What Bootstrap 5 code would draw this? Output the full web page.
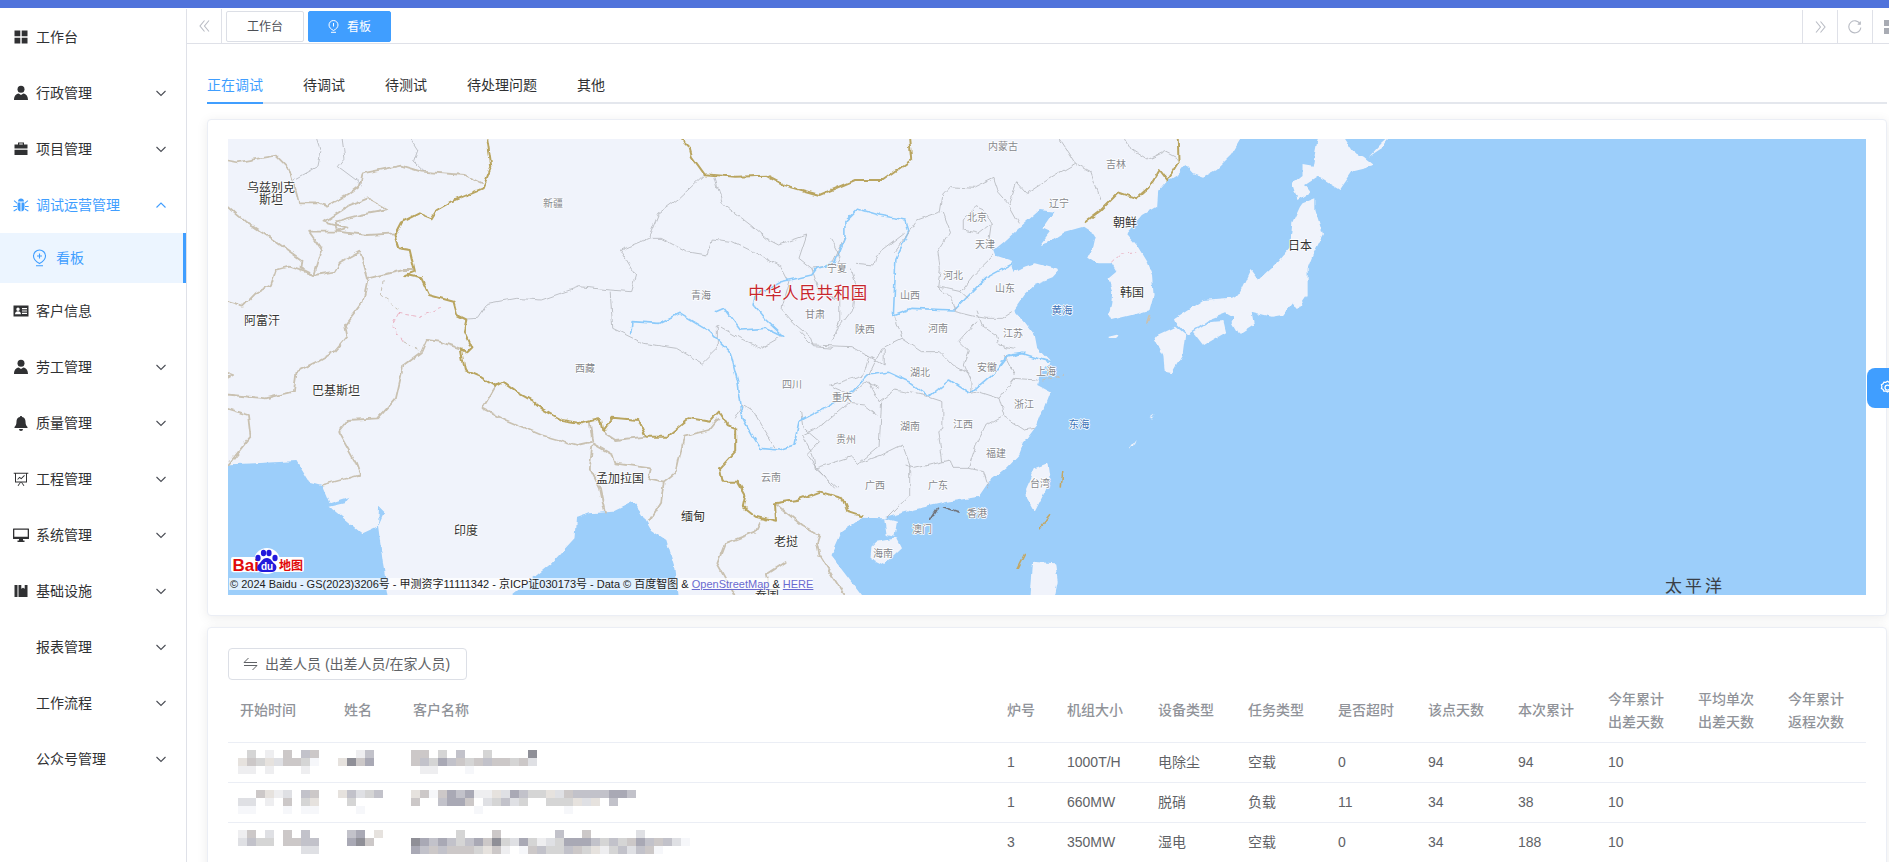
<!DOCTYPE html>
<html lang="zh-CN">
<head>
  <meta charset="UTF-8">
  <title>看板</title>
  <link href="https://cdn.jsdelivr.net/npm/bootstrap@5.3.0/dist/css/bootstrap.min.css" rel="stylesheet">
  <style>
    html, body { height: 862px; overflow: hidden; }
    body { font-family: "Liberation Sans", "Noto Sans CJK SC", sans-serif; font-size: 14px; color: #303133; background: #fff; }
    .top-line { height: 8px; background: #5073db; border-bottom: 0; }
    .shell { height: 854px; padding-top: 1px; }

    /* sidebar */
    .side-nav { width: 187px; flex: none; border-right: 1px solid #dfe1e8; }
    .side-item { height: 56px; padding-left: 13px; padding-right: 19px; color: #303133; white-space: nowrap; }
    .side-item .ico { width: 16px; height: 16px; flex: none; margin-right: 7px; fill: #303133; }
    .side-item .no-ico { width: 23px; flex: none; }
    .side-item .arrow { width: 12px; height: 12px; margin-left: auto; fill: none; stroke: #4a4d55; stroke-width: 1.1; }
    .side-item.is-open, .side-item.is-open .ico { color: #409eff; fill: #409eff; }
    .side-item.is-open .arrow { stroke: #409eff; fill: none; }
    .side-sub { height: 50px; padding-left: 32px; background: #ecf5ff; color: #409eff; border-right: 3px solid #409eff; }
    .side-sub svg { width: 15px; height: 18px; margin-right: 9px; fill: none; stroke: #409eff; stroke-width: 1.1; }

    /* tab strip, runs a little past the window on the right like the original */
    .main-col { min-width: 0; width: 1702px; flex: none; }
    .tab-strip { height: 35px; width: 1720px; border-bottom: 1px solid #dfe1e8; }
    .strip-btn { width: 35px; height: 34px; flex: none; }
    .strip-btn svg { width: 11px; height: 14px; fill: none; stroke: #b9bcc4; stroke-width: 1.1; }
    .strip-btn svg.wide-ico { width: 14px; }
    .strip-left { border-right: 1px solid #dfe1e8; }
    .strip-right { border-left: 1px solid #dfe1e8; margin-top: 1px; }
    .strip-grid { padding: 10px 0 0 11px; }
    .strip-grid svg { width: 14px; height: 14px; stroke: none; fill: #a9acb4; }
    .open-tab { height: 31px; margin-top: 2px; border: 1px solid #dcdfe6; border-radius: 2px; font-size: 12px; color: #4c4f55; width: 78px; }
    .open-tab.is-current { width: 83px; background: #409eff; border-color: #409eff; color: #fff; margin-left: 4px; }
    .open-tab svg { width: 11px; height: 13px; margin-right: 8px; fill: none; stroke: #fff; stroke-width: 1; }

    /* page tabs */
    .page-body { padding: 16px 2px 0 20px; }
    .page-tabs { height: 44px; border-bottom: 2px solid #e4e7ed; gap: 40px; margin-bottom: 15px; }
    .page-tabs a { display: block; height: 44px; line-height: 50px; color: #303133; text-decoration: none; white-space: nowrap; }
    .page-tabs a.is-current { color: #409eff; border-bottom: 2px solid #409eff; }

    /* panels */
    .panel { border: 1px solid #ebeef5; border-radius: 4px; box-shadow: 0 2px 12px rgba(0,0,0,.08); padding: 19px 20px; background: #fff; }
    .panel-map { height: 497px; margin-bottom: 11px; }
    .map-box { height: 456px; background: #f0f3fb; overflow: hidden; }
    .map-box svg.map-art { display: block; width: 100%; height: 456px; }
    .map-art polyline, .map-art polygon { vector-effect: non-scaling-stroke; stroke-linejoin: round; }
    .map-art .sea { fill: #9ccefa; stroke: none; }
    .map-art .land { fill: #f0f3fb; stroke: none; }
    .map-art .prov { fill: none; stroke: #b3b5ba; stroke-width: .8; }
    .map-art .nation { fill: none; stroke: #c9c1b1; stroke-width: 1.8; }
    .map-art .gold { fill: none; stroke: #b9a561; stroke-width: 2; }
    .map-art .river { fill: none; stroke: #8ccafa; stroke-width: 1.6; }
    .map-art .dash-pink { fill: none; stroke: #eab4c4; stroke-width: 1; stroke-dasharray: 4 3; }
    .map-art .dash-gray { fill: none; stroke: #c6c0b4; stroke-width: 1; stroke-dasharray: 4 3; }
    .map-art .sea-line { fill: none; stroke: #c2a765; stroke-width: 1.6; }
    .map-art .hk-line { fill: none; stroke: #70727a; stroke-width: 1.6; }
    .map-art text { font-family: "Noto Sans CJK SC", sans-serif; text-anchor: middle; dominant-baseline: central; paint-order: stroke; stroke: #fff; stroke-width: 1.5px; stroke-linejoin: round; }
    .map-art .lb-big { font-size: 12px; fill: #333; }
    .map-art .lb-prov { font-size: 10px; fill: #85878d; }
    .map-art .lb-sea { font-size: 10.5px; fill: #3a72b8; }
    .map-art .lb-cn { font-size: 16.5px; fill: #c6262e; stroke-width: 1px; letter-spacing: .6px; }
    .map-art .lb-pac { font-size: 17px; fill: #3a3f46; stroke: none; letter-spacing: 3px; }
    .map-art .logo-red { font-family: "Liberation Sans", sans-serif; font-weight: 700; text-anchor: start; fill: #e10a0a; font-size: 17px; stroke-width: 2.5px; }
    .map-art .logo-map { font-family: "Noto Sans CJK SC", sans-serif; font-size: 12px; stroke-width: 0; }
    .map-art .logo-du { font-family: "Liberation Sans", sans-serif; font-weight: 700; font-size: 10px; fill: #fff; stroke: none; }
    .map-copy { position: absolute; left: 1px; bottom: 5px; height: 12px; line-height: 12px; font-size: 11px; color: #222; background: rgba(255,255,255,.7); white-space: nowrap; padding-left: 1px; }
    .map-copy a { color: #6a6ad0; }

    /* staff table */
    .panel-staff { height: 400px; }
    .staff-btn { height: 32px; width: 239px; margin-top: 1px; font-size: 14px; color: #606266; border: 1px solid #dcdfe6; border-radius: 4px; background: #fff; padding: 0 0 0 14px; white-space: nowrap; }
    .staff-btn svg { width: 15px; height: 14px; margin-right: 7px; fill: none; stroke: #606266; stroke-width: 1; }
    .staff-table { table-layout: fixed; width: 1638px; margin: 0; font-size: 14px; }
    .staff-table th { height: 62px; color: #909399; font-weight: 500; padding: 0 12px; vertical-align: middle; line-height: 23px; border-bottom: 1px solid #ebeef5; white-space: nowrap; }
    .staff-table td { height: 40px; color: #606266; padding: 0 12px; vertical-align: middle; border-bottom: 1px solid #ebeef5; white-space: nowrap; overflow: visible; }
    .col-start { width: 104px; } .col-name { width: 69px; } .col-client { width: 594px; }
    .col-boiler { width: 60px; } .col-unit { width: 91px; } .col-std { width: 90px; }
    .mosaic { display: block; margin-left: -2px; overflow: visible; }
    .mosaic.is-name { margin-left: -6px; }

    .float-set { position: absolute; left: 1867px; top: 368px; width: 40px; height: 40px; background: #409eff; border-radius: 8px 0 0 8px; padding: 12px 0 0 13px; }
    .float-set svg { display: block; width: 15px; height: 15px; fill: none; stroke: #fff; stroke-width: 1.5; }
  </style>
</head>
<body>
  <svg width="0" height="0" class="position-absolute">
    <symbol id="i-user" viewBox="0 0 16 16"><circle cx="8" cy="4.2" r="3.5"/><path d="M1 15c0-4.2 2.2-6.2 4.6-6.6L8 10l2.4-1.6c2.400.4 4.600 2.400 4.600 6.600z"/></symbol>
    <symbol id="i-down" viewBox="0 0 12 12"><path d="M1.500 4l4.500 4.500L10.500 4"/></symbol>
    <symbol id="i-up" viewBox="0 0 12 12"><path d="M1.500 8.500L6 4l4.500 4.500"/></symbol>
  </svg>

  <div class="top-line"></div>
  <div class="d-flex shell">
    <!-- Sidebar -->
    <nav class="side-nav">
      <div class="side-item d-flex align-items-center"><svg class="ico" viewBox="0 0 16 16"><path d="M1.500 1.500h5.800v5.800H1.500zM8.700 1.500h5.800v5.800H8.700zM1.500 8.700h5.800v5.800H1.500zM8.700 8.700h5.800v5.800H8.700z"/></svg>工作台</div>
      <div class="side-item d-flex align-items-center"><svg class="ico"><use href="#i-user"/></svg>行政管理<svg class="arrow"><use href="#i-down"/></svg></div>
      <div class="side-item d-flex align-items-center"><svg class="ico" viewBox="0 0 16 16"><path fill-rule="evenodd" d="M5 3.500V1.500h6v2h3.500v4h-13v-4zM6.200 3.500h3.600V2.600H6.200zM1.500 8.700h13V14h-13z"/></svg>项目管理<svg class="arrow"><use href="#i-down"/></svg></div>
      <div class="side-item is-open d-flex align-items-center"><svg class="ico" viewBox="0 0 16 16"><path d="M5 4.500C5 2.600 6.300 1.500 8 1.500s3 1.100 3 3zM4.500 5.500h3v9C5.500 14.300 4.500 12.500 4.500 10.500zM8.500 5.500h3v5c0 2-1 3.800-3 4zM.7 4l.8-.7L4 5.500v1.200zM15.300 4l-.8-.7L12 5.500v1.200zM.3 9h3.700v1H.3zM12 9h3.700v1H12zM1 14.500l-.7-.7L3.800 11.500l.5 1zM15 14.500l.7-.7-3.500-2.300-.5 1z"/></svg>调试运营管理<svg class="arrow"><use href="#i-up"/></svg></div>
      <div class="side-sub d-flex align-items-center"><svg viewBox="0 0 15 18"><path d="M7.500 14.500C3.800 12.500 1.500 10 1.500 7a6 6 0 0112 0c0 3-2.300 5.500-6 7.500z"/><path d="M7.500 4.500v5M5 7h5M4 16.700h7"/></svg>看板</div>
      <div class="side-item d-flex align-items-center"><svg class="ico" viewBox="0 0 16 16"><path fill-rule="evenodd" d="M.5 2.500h15v11H.5zM9 5v1.200h5V5zM9 7.400v1.200h5V7.400zM9 9.800V11h5V9.800zM5 4.600a1.700 1.700 0 100 3.400 1.700 1.700 0 000-3.400zM2 11.300h6c0-2-1.300-3-3-3s-3 1-3 3z"/></svg>客户信息</div>
      <div class="side-item d-flex align-items-center"><svg class="ico"><use href="#i-user"/></svg>劳工管理<svg class="arrow"><use href="#i-down"/></svg></div>
      <div class="side-item d-flex align-items-center"><svg class="ico" viewBox="0 0 16 16"><path d="M8 1c.7 0 1.100.4 1.100 1 2.300.5 3.400 2.300 3.400 4.500 0 3 .8 4.300 2 5.500v1H1.500v-1c1.200-1.200 2-2.500 2-5.500C3.500 4.300 4.600 2.500 6.900 2c0-.6.400-1 1.100-1zM6 14h4a2 2 0 01-4 0z"/></svg>质量管理<svg class="arrow"><use href="#i-down"/></svg></div>
      <div class="side-item d-flex align-items-center"><svg class="ico" viewBox="0 0 16 16"><path fill-rule="evenodd" d="M.7 1.700h14.600v1H14v8.800H9l2.400 3-.8.600L8.200 11.500h-.4L5.400 15.100l-.8-.6L7 11.500H2V2.700H.7zM3 2.700v7.800h10V2.700z"/><path d="M4.300 8.200l2.200-2.400 1.700 1.300 3-3 .6.600-3.500 3.600-1.800-1.300-1.600 1.800z"/></svg>工程管理<svg class="arrow"><use href="#i-down"/></svg></div>
      <div class="side-item d-flex align-items-center"><svg class="ico" viewBox="0 0 16 16"><path fill-rule="evenodd" d="M.5 1.500h15a.5.500 0 01.5.500v9.500a.5.500 0 01-.5.500H10v1.500h1.500V15h-7v-1.500H6V12H.5a.5.500 0 01-.5-.5V2a.5.500 0 01.5-.5zM1.300 2.800v7h13.400v-7z"/></svg>系统管理<svg class="arrow"><use href="#i-down"/></svg></div>
      <div class="side-item d-flex align-items-center"><svg class="ico" viewBox="0 0 16 16"><path d="M1.500 2h3v12h-3zM5.500 2h2.800v3.800L10 4.700l1.700 1.100V2h2.800v12h-9z"/></svg>基础设施<svg class="arrow"><use href="#i-down"/></svg></div>
      <div class="side-item d-flex align-items-center"><span class="no-ico"></span>报表管理<svg class="arrow"><use href="#i-down"/></svg></div>
      <div class="side-item d-flex align-items-center"><span class="no-ico"></span>工作流程<svg class="arrow"><use href="#i-down"/></svg></div>
      <div class="side-item d-flex align-items-center"><span class="no-ico"></span>公众号管理<svg class="arrow"><use href="#i-down"/></svg></div>
    </nav>

    <div class="main-col">
      <!-- Open tabs -->
      <div class="tab-strip d-flex">
        <div class="strip-btn strip-left d-flex align-items-center justify-content-center me-1"><svg viewBox="0 0 11 14"><path d="M5.500 1.500L1 7l4.500 5.500M10 1.500L5.500 7l4.500 5.500"/></svg></div>
        <div class="open-tab d-flex align-items-center justify-content-center">工作台</div>
        <div class="open-tab is-current d-flex align-items-center justify-content-center"><svg viewBox="0 0 11 13"><path d="M5.500 10.500C3 9.200 1 7.500 1 5a4.500 4.500 0 019 0c0 2.500-2 4.200-4.500 5.500zM5.500 3v3.500M3 12.300h5"/></svg>看板</div>
        <div class="ms-auto d-flex">
          <div class="strip-btn strip-right d-flex align-items-center justify-content-center"><svg viewBox="0 0 11 14"><path d="M1 1.500L5.500 7 1 12.500M5.500 1.500L10 7l-4.500 5.500"/></svg></div>
          <div class="strip-btn strip-right d-flex align-items-center justify-content-center"><svg class="wide-ico" viewBox="0 0 14 14"><path d="M11.800 3.500A6 6 0 102.500 11a6 6 0 0010.300-3.500"/><path d="M12.300 1.500v2.800H9.700" fill="#b9bcc4"/></svg></div>
          <div class="strip-btn strip-right strip-grid d-flex align-items-start"><svg viewBox="0 0 14 14"><path d="M0 0h6v6H0zM8 0h6v6H8zM0 8h6v6H0zM8 8h6v6H8z"/></svg></div>
        </div>
      </div>

      <div class="page-body">
        <!-- Page tabs -->
        <div class="page-tabs d-flex">
          <a class="is-current" href="#">正在调试</a>
          <a href="#">待调试</a>
          <a href="#">待测试</a>
          <a href="#">待处理问题</a>
          <a href="#">其他</a>
        </div>

        <!-- Map -->
        <div class="panel panel-map">
          <div class="map-box position-relative">
            <svg class="map-art" viewBox="228 139 1638 456" preserveAspectRatio="none">
              <defs>
                <filter id="wiggle" filterUnits="userSpaceOnUse" x="190" y="100" width="1720" height="540">
                  <feTurbulence type="fractalNoise" baseFrequency=".11" numOctaves="2" seed="4"/>
                  <feDisplacementMap in="SourceGraphic" scale="5" xChannelSelector="R" yChannelSelector="G"/>
                  <feGaussianBlur stdDeviation=".25"/>
                </filter>
              </defs>
              <g filter="url(#wiggle)">
              <!-- west part, coordinates follow the left half -->
              <g transform="translate(225 135) scale(.5102 .33333)">
                <polygon class="sea" points="-20,990 60,985 140,978 165,1040 190,1050 205,1105 245,1085 235,1105 205,1115 268,1195 300,1172 302,1115 312,1130 300,1172 310,1290 325,1420 -20,1420"/>
                <polygon class="sea" points="530,1420 640,1285 685,1210 688,1150 715,1135 760,1130 800,1100 815,1130 835,1185 865,1215 880,1290 890,1420"/>
                <polyline class="nation" points="-20,70 25,82 100,62 125,100 140,175 145,205 185,205 200,215 240,180 265,150 270,115 345,92 385,110 470,120 505,145"/>
                <polyline class="nation" points="240,215 280,190 320,225 265,240 215,260 220,290 280,300 332,295"/>
                <polyline class="nation" points="240,215 195,260 240,278 215,290 165,290 190,345 175,420 215,410 225,385 265,350 280,430 350,405 372,405"/>
                <polyline class="nation" points="-20,180 40,260 100,320 150,375 148,400 175,420"/>
                <polyline class="nation" points="-20,490 35,515 60,475 90,450 100,405 125,395 175,420"/>
                <polyline class="nation" points="280,430 270,500 235,570 240,605 215,650 180,680 140,710 135,770 80,790 -20,775"/>
                <polyline class="nation" points="385,650 350,690 335,790 300,850 240,855 222,890 255,980 265,1020 190,1050"/>
                <polyline class="nation" points="-20,700 18,720 -20,750"/>
                <polyline class="nation" points="-20,810 45,840 50,905 6,990"/>
                <polyline class="nation" points="385,650 395,615 420,620 460,640"/>
                <polyline class="nation" points="530,755 505,820 550,855 620,900 690,930 720,920 715,860"/>
                <polyline class="nation" points="740,890 765,915 825,905"/>
                <polyline class="nation" points="720,925 760,960 765,985 835,1000 830,1030 860,1040 855,1100 830,1160"/>
                <polyline class="nation" points="720,930 715,1000 735,1060 745,1135"/>
                <polyline class="nation" points="860,1040 885,1010 900,905 950,885 968,850"/>
                <polyline class="nation" points="1078,1105 1130,1170 1165,1200 1160,1225 1165,1260 1230,1420"/>
                <polyline class="nation" points="1050,1160 1040,1190 980,1225 965,1285 985,1340 1010,1420"/>
                <polyline class="nation" points="1100,1280 1060,1320 1075,1420"/>
                <polyline class="prov" points="175,-10 188,50 182,95 135,135"/>
                <polyline class="prov" points="228,-10 235,70 222,95 270,150"/>
                <polyline class="prov" points="355,-10 378,45 370,80 390,110"/>
                <polyline class="dash-gray" points="310,435 305,480 340,520"/>
                <polyline class="dash-gray" points="348,620 385,650"/>
                <polyline class="dash-pink" points="340,535 380,545 425,520"/>
                <polyline class="dash-pink" points="340,535 328,570 348,620"/>
                <polyline class="prov" points="940,118 890,190 850,235 830,310 775,345 805,420 795,470 755,465 695,455 620,495 570,490 515,505 495,550 475,552"/>
                <polyline class="prov" points="755,470 760,580 820,625 885,640 935,685 965,640 965,570 1010,610 1050,640 1090,605"/>
                <polyline class="prov" points="830,310 855,310 905,350 945,360 955,312 995,320 1035,350 1090,395 1105,440 1090,520 1115,565 1150,610 1155,635 1190,640"/>
                <polyline class="prov" points="960,125 975,205 1030,270 1060,310 1085,330 1140,300 1125,370 1150,400 1190,390 1215,305"/>
                <polyline class="prov" points="1150,400 1165,470 1205,495 1205,560 1190,610"/>
                <polyline class="prov" points="1000,850 1015,810 1035,830 1050,870 1080,940"/>
                <polyline class="prov" points="1135,880 1165,920 1140,960 1160,1000 1195,1060"/>
                <polyline class="prov" points="1135,880 1130,830"/>
                <polyline class="river" points="962,530 978,520 1010,585 1060,580 1095,605 1060,555 1035,510 1040,480 1090,440 1150,420 1160,400 1195,385 1215,310 1215,260 1240,222 1280,240 1335,255 1340,290 1315,370 1310,540 1345,520 1430,525 1490,430 1545,385"/>
                <polyline class="river" points="795,598 798,560 850,565 890,535 950,590 990,650 1005,740 1015,850 1035,905 1050,940 1085,945 1115,930 1125,860 1180,815 1230,770 1260,720 1300,712 1340,740 1380,785 1420,735 1460,775 1510,710 1535,660 1568,655"/>
                <polyline class="gold" points="512,-10 522,95 505,160 450,195 415,225 405,250 380,235 345,262 332,300 340,340 362,345 372,410 355,420 385,430 400,480 448,500 455,540 475,555 470,590 485,640 475,655 462,640 470,705 500,725 530,755 545,742 570,770 605,800 625,825 660,855 700,865 735,852 740,890 760,848 810,855 825,905 865,905 910,850 950,860 968,830 985,870 1000,880 1000,950 970,1000 975,1040 1005,1040 1020,1080 1015,1115 1040,1145 1080,1160 1078,1105 1120,1095 1165,1070 1210,1090 1220,1130 1250,1145"/>
                <polyline class="gold" points="880,-10 910,35 915,65 940,118 1000,125 1060,122 1095,150 1165,180 1235,135 1290,135 1345,75 1340,-10"/>
              </g>
              <!-- east part, coordinates follow the right half -->
              <g transform="translate(800 135) scale(.5102 .33333)">
                <polygon class="sea" points="880,-30 845,60 815,105 790,125 770,115 755,90 742,115 720,135 700,170 698,215 670,240 640,295 660,330 680,380 690,420 693,480 685,525 650,540 610,555 605,540 610,510 612,470 605,430 620,410 610,385 585,385 565,365 575,335 580,300 555,275 520,290 490,320 470,330 490,290 475,280 497,230 470,225 440,265 400,320 380,345 385,365 415,380 420,410 440,395 460,385 510,405 495,430 460,450 440,480 420,525 440,560 460,600 465,640 490,680 470,720 465,750 490,770 480,810 465,870 440,920 430,960 405,1000 370,1040 350,1085 290,1100 220,1125 165,1150 120,1148 80,1190 60,1260 140,1420 2200,1420 2200,-30"/>
                <polygon class="land" points="1020,-30 1050,-30 1085,50 1105,65 1125,90 1085,105 1058,165 1015,125 990,150 1000,170 975,195 965,145 985,120 985,90 1005,95 1010,50"/>
                <polygon class="land" points="985,205 1010,190 1010,225 1025,300 1005,360 995,400 995,480 975,525 965,500 945,540 925,545 885,530 890,570 860,600 840,545 800,555 780,580 760,600 740,570 735,550 790,495 845,488 865,470 885,405 900,435 935,385 960,340 965,265 980,215"/>
                <polygon class="sea" points="765,590 800,555 835,535 850,548 835,590 790,632"/>
                <polygon class="land" points="770,590 800,562 830,558 835,590 790,630"/>
                <polygon class="land" points="700,600 735,575 755,600 750,660 730,715 715,710 712,660 695,610"/>
                <polygon class="land" points="460,1000 485,985 490,1040 470,1100 460,1130 445,1090 443,1060"/>
                <polygon class="land" points="150,1220 190,1210 200,1240 165,1290 138,1270 140,1235"/>
                <polygon class="land" points="455,1280 500,1285 505,1340 495,1420 448,1420"/>
                <polygon class="land" points="605,605 625,598 620,612 605,612"/>
                <polygon class="land" points="1115,65 1140,25 1165,-10 1140,40"/>
                <polygon class="land" points="165,1150 190,1160 185,1205 170,1200"/>
                <polygon class="land" points="645,945 660,915 655,935"/>
                <polygon class="land" points="685,850 695,838 690,850"/>
                <polyline class="prov" points="500,-10 530,60 540,85 570,110 590,195"/>
                <polyline class="prov" points="425,140 445,175 490,130 540,85"/>
                <polyline class="prov" points="630,-10 650,45 680,75 715,50 740,70"/>
                <polyline class="prov" points="425,140 410,210 430,265"/>
                <polyline class="prov" points="295,155 280,180 275,230 230,255 215,290 185,350"/>
                <polyline class="prov" points="295,155 340,160 380,130 390,175 410,210"/>
                <polyline class="prov" points="345,215 320,255 320,285 350,295 375,265 360,225 345,215"/>
                <polyline class="prov" points="375,265 370,320 380,345"/>
                <polyline class="prov" points="280,230 295,290 270,350 275,400 270,455 315,470 330,490"/>
                <polyline class="prov" points="270,455 300,500 305,530 345,545 365,550 395,550 415,530"/>
                <polyline class="prov" points="380,360 340,420 315,470"/>
                <polyline class="prov" points="345,530 355,570 385,600 390,630 420,640"/>
                <polyline class="prov" points="400,660 420,720"/>
                <polyline class="prov" points="185,540 200,610 240,650 275,650 300,690 330,715"/>
                <polyline class="prov" points="345,560 310,620 330,650 320,690 335,740 335,775"/>
                <polyline class="prov" points="335,775 350,770 390,790 420,730 465,735"/>
                <polyline class="prov" points="135,720 160,640 200,610"/>
                <polyline class="prov" points="130,660 165,690 165,640"/>
                <polyline class="prov" points="135,740 155,800 185,765 240,780 280,800 280,880 270,890 280,980"/>
                <polyline class="prov" points="390,790 400,840 365,870 345,930 330,1000"/>
                <polyline class="prov" points="400,845 440,885 460,880"/>
                <polyline class="prov" points="205,990 225,1000 295,975 300,1000 330,1000 360,1010 370,1060"/>
                <polyline class="prov" points="30,1000 70,980 100,965 115,985 160,960 200,930 215,990 215,1080 170,1150"/>
                <polyline class="prov" points="160,800 155,935 115,985"/>
                <polyline class="prov" points="5,900 25,960 30,1000 75,1060"/>
                <polyline class="prov" points="5,900 45,870 60,850 95,805 125,810 150,840"/>
                <polyline class="prov" points="60,750 70,760 100,780 130,740 155,760"/>
                <polyline class="prov" points="60,620 75,580 105,520 110,450 100,400"/>
                <polyline class="prov" points="0,590 25,630 100,635 135,665 125,720 60,750"/>
                <polyline class="prov" points="60,310 80,370 70,395"/>
                <polyline class="prov" points="205,295 150,360 145,390 110,385"/>
                <polyline class="river" points="393,680 410,665 435,655 465,670 490,680"/>
                <polyline class="dash-pink" points="610,385 630,355 660,350"/>
                <polyline class="dash-gray" points="475,735 517,718"/>
                <polyline class="hk-line" points="270,1118 255,1155"/>
                <polyline class="hk-line" points="280,1115 313,1132"/>
                <polyline class="sea-line" points="515,1008 512,1058"/>
                <polyline class="sea-line" points="492,1138 470,1180"/>
                <polyline class="sea-line" points="441,1252 425,1300"/>
                <polyline class="nation" points="685,540 680,570"/>
                <polyline class="gold" points="740,-10 742,80 720,135 705,105 685,155 660,190 625,172 590,225 558,262"/>
              </g>
              </g>

              <!-- labels -->
              <text class="lb-big" x="271" y="186">乌兹别克</text><text class="lb-big" x="271" y="198">斯坦</text>
              <text class="lb-big" x="262" y="319">阿富汗</text><text class="lb-big" x="336" y="389">巴基斯坦</text>
              <text class="lb-big" x="620" y="477">孟加拉国</text><text class="lb-big" x="466" y="529">印度</text>
              <text class="lb-big" x="693" y="515">缅甸</text><text class="lb-big" x="786" y="540">老挝</text>
              <text class="lb-big" x="1125" y="221">朝鲜</text><text class="lb-big" x="1132" y="291">韩国</text>
              <text class="lb-big" x="1300" y="244">日本</text><text class="lb-big" x="767" y="593">泰国</text>
              <text class="lb-cn" x="808" y="292">中华人民共和国</text>
              <text class="lb-pac" x="1695" y="584">太平洋</text>
              <text class="lb-sea" x="1062" y="309">黄海</text><text class="lb-sea" x="1079" y="423">东海</text>
              <text class="lb-prov" x="553" y="202">新疆</text><text class="lb-prov" x="1003" y="145">内蒙古</text>
              <text class="lb-prov" x="1116" y="163">吉林</text><text class="lb-prov" x="1059" y="202">辽宁</text>
              <text class="lb-prov" x="977" y="216">北京</text><text class="lb-prov" x="985" y="243">天津</text>
              <text class="lb-prov" x="953" y="274">河北</text><text class="lb-prov" x="1005" y="287">山东</text>
              <text class="lb-prov" x="910" y="294">山西</text><text class="lb-prov" x="837" y="267">宁夏</text>
              <text class="lb-prov" x="701" y="294">青海</text><text class="lb-prov" x="815" y="313">甘肃</text>
              <text class="lb-prov" x="865" y="328">陕西</text><text class="lb-prov" x="938" y="327">河南</text>
              <text class="lb-prov" x="1013" y="332">江苏</text><text class="lb-prov" x="987" y="366">安徽</text>
              <text class="lb-prov" x="920" y="371">湖北</text><text class="lb-prov" x="1046" y="370">上海</text>
              <text class="lb-prov" x="792" y="383">四川</text><text class="lb-prov" x="585" y="367">西藏</text>
              <text class="lb-prov" x="842" y="396">重庆</text><text class="lb-prov" x="1024" y="403">浙江</text>
              <text class="lb-prov" x="963" y="423">江西</text><text class="lb-prov" x="910" y="425">湖南</text>
              <text class="lb-prov" x="846" y="438">贵州</text><text class="lb-prov" x="996" y="452">福建</text>
              <text class="lb-prov" x="771" y="476">云南</text><text class="lb-prov" x="875" y="484">广西</text>
              <text class="lb-prov" x="938" y="484">广东</text><text class="lb-prov" x="1040" y="482">台湾</text>
              <text class="lb-prov" x="977" y="512">香港</text><text class="lb-prov" x="922" y="528">澳门</text>
              <text class="lb-prov" x="883" y="552">海南</text>

              <!-- baidu logo -->
              <rect x="231" y="557" width="73" height="15" rx="2" fill="#fff"/>
              <circle cx="267" cy="561" r="13" fill="#fff"/>
              <text class="logo-red" x="232.500" y="565">Bai</text>
              <g fill="#2319dc">
                <ellipse cx="258" cy="558" rx="2.600" ry="3.300"/><ellipse cx="263.500" cy="553" rx="2.600" ry="3.300"/>
                <ellipse cx="269" cy="553" rx="2.600" ry="3.300"/><ellipse cx="275" cy="558" rx="2.600" ry="3.300"/>
                <path d="M267 558c4 0 5 4 8 6 3 3 1 8-3 8h-10c-4 0-6-4-4-7 3-2 4-7 9-7z"/>
              </g>
              <text class="logo-du" x="267" y="566">du</text>
              <text class="logo-red logo-map" x="279" y="564.500">地图</text>
            </svg>
            <div class="map-copy">© 2024 Baidu - GS(2023)3206号 - 甲测资字11111342 - 京ICP证030173号 - Data © 百度智图 &amp; <a href="#">OpenStreetMap</a> &amp; <a href="#">HERE</a></div>
          </div>
        </div>

        <!-- Staff table -->
        <div class="panel panel-staff">
          <button type="button" class="staff-btn d-flex align-items-center"><svg viewBox="0 0 15 14"><path d="M5.500 1L1 5.500h13M1 8.500h13L9.500 13"/></svg>出差人员 (出差人员/在家人员)</button>
          <table class="table staff-table">
            <colgroup>
              <col class="col-start"><col class="col-name"><col class="col-client"><col class="col-boiler"><col class="col-unit">
              <col class="col-std"><col class="col-std"><col class="col-std"><col class="col-std"><col class="col-std">
              <col class="col-std"><col class="col-std"><col class="col-std">
            </colgroup>
            <thead>
              <tr><th>开始时间</th><th>姓名</th><th>客户名称</th><th>炉号</th><th>机组大小</th><th>设备类型</th><th>任务类型</th><th>是否超时</th><th>该点天数</th><th>本次累计</th><th>今年累计<br>出差天数</th><th>平均单次<br>出差天数</th><th>今年累计<br>返程次数</th></tr>
            </thead>
            <tbody id="staffRows"></tbody>
          </table>
        </div>
      </div>
    </div>
  </div>

  <div class="float-set"><svg viewBox="0 0 18 18"><path d="M9 1.500l2 1.300 2.300-.3 1 2.100 2 1.200-.6 2.200.6 2.200-2 1.200-1 2.100-2.300-.3-2 1.300-2-1.300-2.300.3-1-2.100-2-1.200.6-2.200-.6-2.200 2-1.200 1-2.100 2.300.3z"/><circle cx="9" cy="9" r="3"/></svg></div>

  <script src="https://cdn.jsdelivr.net/npm/bootstrap@5.3.0/dist/js/bootstrap.bundle.min.js"></script>
  <script>
    // names are blurred in the source, so each cell is a small block mosaic
    const shades = { 1: "#f6f7fa", 2: "#eeeef0", 3: "#e6e2de", 4: "#dfe0e4", 5: "#d5d5d5", 6: "#ccc8c8", 7: "#c2c2ca", 8: "#a9a9b5", 9: "#8f8f97" };

    function mosaic(lines, extra) {
      let rects = "";
      lines.forEach((line, y) => {
        [...line].forEach((c, x) => {
          if (c !== "0") rects += `<rect x="${x * 9}" y="${y * 8}" width="9" height="8" fill="${shades[c]}"/>`;
        });
      });
      const w = Math.max(...lines.map(l => l.length)) * 9;
      return `<svg class="mosaic ${extra || ""}" width="${w}" height="${lines.length * 8}">${rects}</svg>`;
    }

    const rows = [
      [["050206076", "365346651", "220200020"], ["0027", "3968", "0000"], ["660507005000090", "675876567665640", "022000100000000"],
        "1", "1000T/H", "电除尘", "空载", "0", "94", "94", "10"],
      [["006324076", "440206053", "110001011"], ["37457", "05000", "00100"], ["36168782234875534677778870", "60078860457450055534307000", "00000001000000000100000000"],
        "1", "660MW", "脱硝", "负载", "11", "34", "38", "10"],
      [["260406070", "475506677", "000000044"], ["07803", "08960", "00000"], ["0000050006000000700600000400000", "9878757869548524588875756876741", "8767666536201675576532574761000"],
        "3", "350MW", "湿电", "空载", "0", "34", "188", "10"]
    ];

    document.getElementById("staffRows").innerHTML = rows.map(r => `
      <tr>
        <td>${mosaic(r[0])}</td><td>${mosaic(r[1], "is-name")}</td><td>${mosaic(r[2])}</td>
        ${r.slice(3).map(v => `<td>${v}</td>`).join("")}
        <td></td><td></td>
      </tr>`).join("");
  </script>
</body>
</html>
